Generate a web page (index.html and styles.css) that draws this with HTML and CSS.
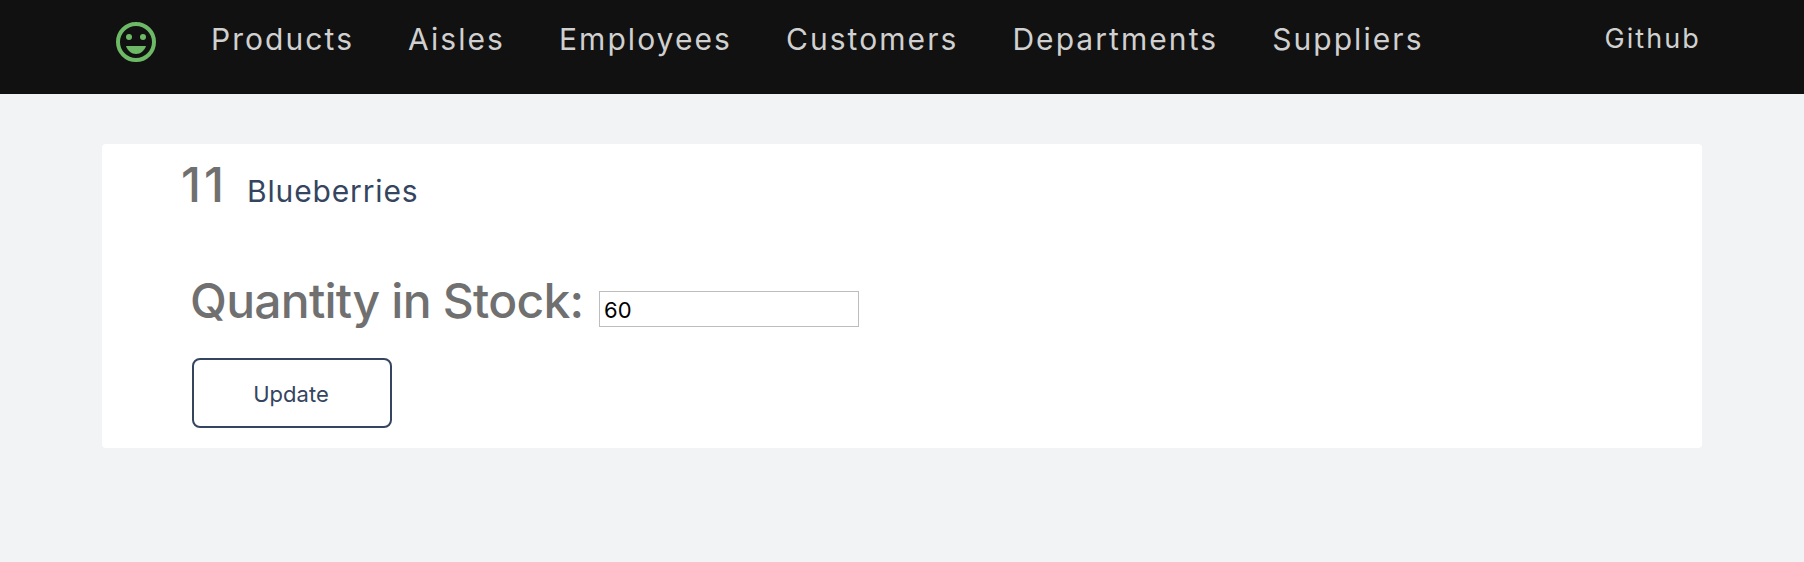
FILE: index.html
```html
<!DOCTYPE html>
<html lang="en">
<head>
<meta charset="utf-8">
<title>Products</title>
<link rel="stylesheet" href="styles.css">
</head>
<body>
<header class="header">
  <a class="logo"><svg width="48" height="48" viewBox="0 0 24 24" fill="currentColor"><circle cx="12" cy="12" r="9" fill="none" stroke="currentColor" stroke-width="2"/><circle cx="8.5" cy="9.5" r="1.5"/><circle cx="15.5" cy="9.5" r="1.5"/><path d="M12 18c2.28 0 4.22-1.66 5-4H7c.78 2.34 2.72 4 5 4z"/></svg></a>
  <nav class="nav">
    <a class="link">Products</a>
    <a class="link">Aisles</a>
    <a class="link">Employees</a>
    <a class="link">Customers</a>
    <a class="link">Departments</a>
    <a class="link">Suppliers</a>
  </nav>
  <a class="github">Github</a>
</header>
<main class="card">
  <div class="product"><span class="product-id">11</span><span class="product-name">Blueberries</span></div>
  <form class="form">
    <div class="field"><label class="label" for="qty">Quantity in Stock:</label><input class="input" id="qty" type="text" value="60"></div>
    <button class="button" type="button">Update</button>
  </form>
</main>
</body>
</html>
```
FILE: styles.css
```css
* { box-sizing: border-box; }
body { margin: 0; background: #f1f3f5; font-family: Inter, "Liberation Sans", sans-serif; }
.header { display: flex; height: 94px; padding: 0 103px 0 112px; background: #111; color: #d0d0d0; }
.logo { width: 48px; height: 48px; margin-top: 18px; color: #6db966; }
.logo svg { display: block; }
.nav { display: flex; gap: 54px; margin-left: 51px; }
.link { font-size: 30px; line-height: 78px; letter-spacing: 2.06px; white-space: nowrap; }
.github { margin-left: auto; font-size: 27px; line-height: 78px; letter-spacing: 2.1px; }
.card { height: 304px; margin: 50px 102px 0; background: #fff; border-radius: 4px; }
.product { display: flex; align-items: baseline; height: 80px; padding-left: 79px; line-height: 82px; }
.product-id { width: 66px; font-size: 48px; font-weight: 550; letter-spacing: 3px; color: #707070; }
.product-name { font-size: 30px; letter-spacing: 0.85px; color: #35455f; }
.form { padding: 46px 0 0 88px; }
.field { display: flex; height: 88px; }
.label { width: 409px; font-size: 48px; font-weight: 550; line-height: 61px; letter-spacing: -0.75px; white-space: nowrap; color: #707070; }
.input { width: 260px; height: 36px; margin: 21px 0 0; padding: 2px 4px 0; border: 1px solid #bdbdbd; border-radius: 0; background: #fff; color: #000; font: 22px Inter, sans-serif; }
.button { display: block; width: 200px; height: 70px; margin-left: 2px; padding: 1px 2px 0 0; border: 2px solid #35455f; border-radius: 8px; background: #fff; color: #35455f; font: 22px Inter, sans-serif; }
```
